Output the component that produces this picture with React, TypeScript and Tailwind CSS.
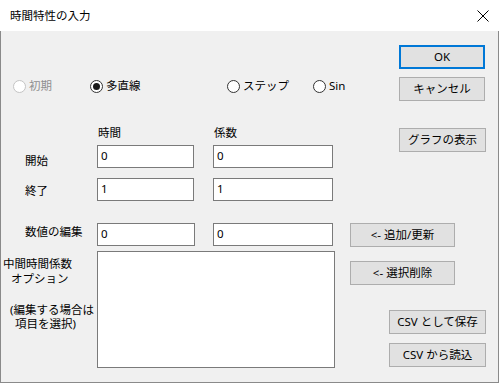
import React from "react";

const font = { fontFamily: '"Noto Sans", "Noto Sans CJK JP", sans-serif' };

function Btn({ children, className = "", primary = false }: { children: React.ReactNode; className?: string; primary?: boolean }) {
  return (
    <div
      className={
        "flex h-[24px] items-center justify-center bg-[#e1e1e1] text-[11.5px] leading-none text-black " +
        (primary ? "border-2 border-[#0078d7] " : "border border-[#adadad] ") +
        className
      }
    >
      {children}
    </div>
  );
}

function Radio({ label, checked = false, disabled = false, className = "" }: { label: string; checked?: boolean; disabled?: boolean; className?: string }) {
  return (
    <div className={"flex h-[18px] items-center gap-[3px] " + className}>
      <div
        className={
          "flex h-[13px] w-[13px] items-center justify-center rounded-full border bg-white " +
          (disabled ? "border-[#c4c4c4]" : "border-[#333333]")
        }
      >
        {checked && <div className="h-[7px] w-[7px] rounded-full bg-[#1a1a1a]" />}
      </div>
      <span className={"text-[11.5px] leading-none " + (disabled ? "text-[#8f8f8f]" : "text-black")}>{label}</span>
    </div>
  );
}

function Input({ value, className = "" }: { value: string; className?: string }) {
  return (
    <div className={"h-[23px] border border-[#7a7a7a] bg-white pl-[3px] pt-[3px] text-[11.5px] leading-[14px] text-black " + className}>
      {value}
    </div>
  );
}

export default function App() {
  return (
    <div className="w-[499px] h-[383px] overflow-hidden bg-white" style={font}>
      {/* title bar */}
      <div className="flex h-[31px] items-center justify-between bg-white pl-[10px]">
        <span className="text-[11.5px] leading-none text-black">時間特性の入力</span>
        <svg width="12" height="12" viewBox="0 0 12 12" className="mr-[10px]">
          <path d="M0.5 0.5 L11.5 11.5 M11.5 0.5 L0.5 11.5" stroke="#000" strokeWidth="1" />
        </svg>
      </div>
      {/* body */}
      <div className="flex h-[352px] border-x border-b border-[#8a8a8a] bg-[#f0f0f0]">
        {/* left column */}
        <div className="flex w-[349px] flex-col">
          <div className="mt-[46px] flex pl-[12px]">
            <Radio label="初期" disabled className="w-[77px]" />
            <Radio label="多直線" checked className="w-[137px]" />
            <Radio label="ステップ" className="w-[86px]" />
            <Radio label="Sin" />
          </div>
          <div className="mt-[30px] flex pl-[97px] text-[11.5px] leading-[16px]">
            <span className="w-[116px]">時間</span>
            <span>係数</span>
          </div>
          <div className="mt-[4px] flex items-start">
            <div className="mt-[8px] w-[96px] pl-[24px] text-[11.5px] leading-[16px]">開始</div>
            <Input value="0" className="w-[97px]" />
            <Input value="0" className="ml-[19px] w-[120px]" />
          </div>
          <div className="mt-[9px] flex items-start">
            <div className="mt-[5px] w-[96px] pl-[24px] text-[11.5px] leading-[16px]">終了</div>
            <Input value="1" className="w-[97px]" />
            <Input value="1" className="ml-[19px] w-[120px]" />
          </div>
          <div className="mt-[22px] flex items-start">
            <div className="mt-[1px] w-[96px] whitespace-nowrap pl-[24px] text-[11.5px] leading-[16px]">数値の編集</div>
            <Input value="0" className="w-[98px]" />
            <Input value="0" className="ml-[18px] w-[120px]" />
          </div>
          <div className="mt-[5px] flex items-start">
            <div className="flex w-[96px] flex-col whitespace-nowrap text-[11.5px] leading-[14px]">
              <span className="mt-[6px] pl-[2px]">中間時間係数</span>
              <span className="mt-[1px] pl-[10px]">オプション</span>
              <span className="mt-[17px] pl-[9px]">(編集する場合は</span>
              <span className="pl-[14px]">項目を選択)</span>
            </div>
            <div className="h-[117px] w-[238px] border border-[#7a7a7a] bg-white" />
          </div>
        </div>
        {/* right column */}
        <div className="flex flex-1 flex-col items-start">
          <Btn primary className="mt-[14px] ml-[49px] w-[86px]">OK</Btn>
          <Btn className="mt-[8px] ml-[49px] w-[86px]">キャンセル</Btn>
          <Btn className="mt-[27px] ml-[49px] w-[87px]">グラフの表示</Btn>
          <Btn className="mt-[71px] w-[105px]">&lt;- 追加/更新</Btn>
          <Btn className="mt-[14px] w-[105px]">&lt;- 選択削除</Btn>
          <Btn className="mt-[25px] ml-[39px] w-[97px]">CSV として保存</Btn>
          <Btn className="mt-[9px] ml-[39px] w-[97px]">CSV から読込</Btn>
        </div>
      </div>
    </div>
  );
}
